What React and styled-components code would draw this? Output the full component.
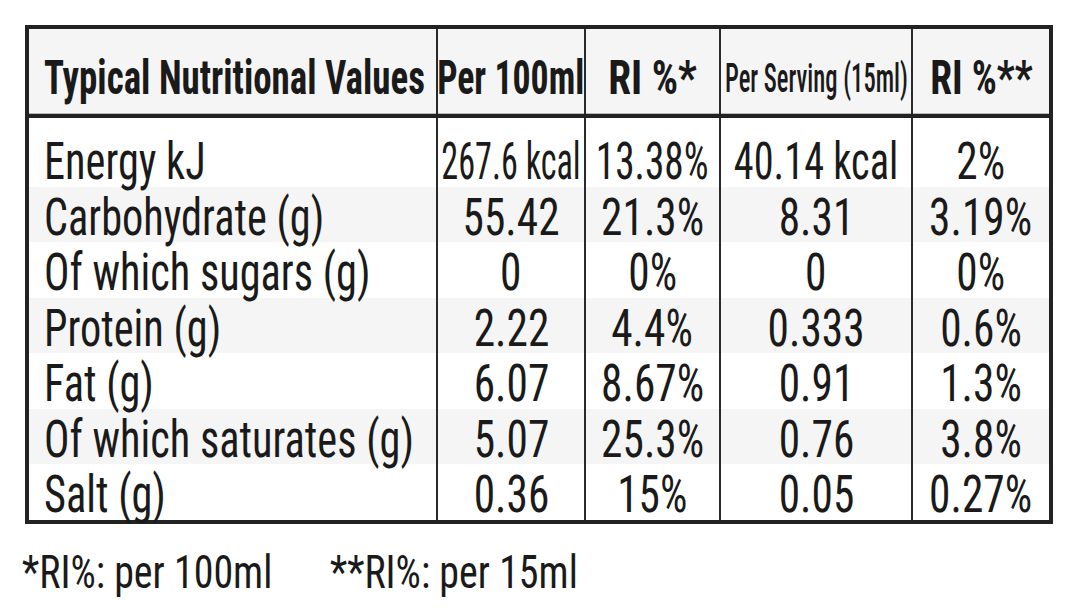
import React from "react";
import styled, { createGlobalStyle } from "styled-components";

const GlobalStyle = createGlobalStyle`
  html, body { margin: 0; padding: 0; background: #ffffff; }
  body { font-family: "Roboto", "Liberation Sans", Arial, sans-serif; color: #1a1a1a; }
`;

const COLS = "407px 148px 135px 192px 138px";

const Page = styled.div`
  padding: 25px 0 0 25px;
  width: 1080px;
  height: 613px;
  box-sizing: border-box;
`;

const Table = styled.div`
  width: 1028px;
  box-sizing: border-box;
  border: 4px solid #222222;
  background: #ffffff;
`;

const HeaderRow = styled.div`
  display: grid;
  grid-template-columns: ${COLS};
  height: 89px;
  box-sizing: border-box;
  border-bottom: 4px solid #222222;
  background: #f5f5f5;
  box-shadow: inset 0 -1px 0 #b8b8b8;
`;

const BodyRow = styled.div`
  display: grid;
  grid-template-columns: ${COLS};
  height: ${(p) => (p.$first ? "68.5px" : "55.5px")};
  padding-top: ${(p) => (p.$first ? "13px" : "0")};
  box-sizing: border-box;
  background: ${(p) => (p.$striped ? "#f5f5f5" : "#ffffff")};
`;

const Cell = styled.div`
  display: flex;
  align-items: flex-start;
  justify-content: ${(p) => (p.$label ? "flex-start" : "center")};
  padding-left: ${(p) => (p.$label ? "15px" : "0")};
  box-sizing: border-box;
  border-left: ${(p) => (p.$label ? "none" : "2px solid #2a2a2a")};
  margin-top: ${(p) => (p.$first ? "-13px" : "0")};
  padding-top: ${(p) => (p.$head ? `${p.$pt || 25}px` : p.$first ? "18px" : "5px")};
  min-width: 0;
`;

const Text = styled.span`
  display: inline-block;
  white-space: nowrap;
  font-family: "Roboto", "Liberation Sans", sans-serif;
  font-stretch: 75%;
  font-size: ${(p) => p.$size || 51}px;
  font-weight: ${(p) => p.$weight || 400};
  line-height: 1;
  transform: scaleX(${(p) => p.$sx || 0.84});
  transform-origin: ${(p) => (p.$left ? "left center" : "center center")};
`;

const Footer = styled.div`
  display: flex;
  gap: 62px;
  margin-top: 24px;
  margin-left: -3px;
`;

const Note = styled.span`
  display: inline-block;
  white-space: nowrap;
  font-family: "Roboto", "Liberation Sans", sans-serif;
  font-stretch: 75%;
  font-size: 47px;
  line-height: 1;
  transform: scaleX(0.85);
  transform-origin: left center;
  width: ${(p) => p.$w}px;
`;

const headers = [
  { t: "Typical Nutritional Values", sx: 0.77 },
  { t: "Per 100ml", sx: 0.745 },
  { t: "RI %*", sx: 0.86 },
  { t: "Per Serving (15ml)", sx: 0.6, size: 41, weight: 500, pt: 29 },
  { t: "RI %**", sx: 0.82 },
];

const rows = [
  ["Energy kJ", "267.6 kcal", "13.38%", "40.14 kcal", "2%"],
  ["Carbohydrate (g)", "55.42", "21.3%", "8.31", "3.19%"],
  ["Of which sugars (g)", "0", "0%", "0", "0%"],
  ["Protein (g)", "2.22", "4.4%", "0.333", "0.6%"],
  ["Fat (g)", "6.07", "8.67%", "0.91", "1.3%"],
  ["Of which saturates (g)", "5.07", "25.3%", "0.76", "3.8%"],
  ["Salt (g)", "0.36", "15%", "0.05", "0.27%"],
];

const special = {
  "0-1": 0.67,
  "0-2": 0.77,
  "0-3": 0.79,
};

const cellScale = (r, c) => special[`${r}-${c}`] || (c === 0 ? 0.83 : 0.85);

export default function App() {
  return (
    <Page>
      <GlobalStyle />
      <Table>
        <HeaderRow>
          {headers.map((h, i) => (
            <Cell key={i} $head $pt={h.pt} $label={i === 0}>
              <Text
                $weight={h.weight || 700}
                $size={h.size || 48}
                $sx={h.sx}
                $left={i === 0}
              >
                {h.t}
              </Text>
            </Cell>
          ))}
        </HeaderRow>
        {rows.map((row, r) => (
          <BodyRow key={r} $striped={r % 2 === 1} $first={r === 0}>
            {row.map((v, c) => (
              <Cell key={c} $label={c === 0} $first={r === 0}>
                <Text $sx={cellScale(r, c)} $left={c === 0}>
                  {v}
                </Text>
              </Cell>
            ))}
          </BodyRow>
        ))}
      </Table>
      <Footer>
        <Note $w={246}>*RI%: per 100ml</Note>
        <Note $w={250}>**RI%: per 15ml</Note>
      </Footer>
    </Page>
  );
}
